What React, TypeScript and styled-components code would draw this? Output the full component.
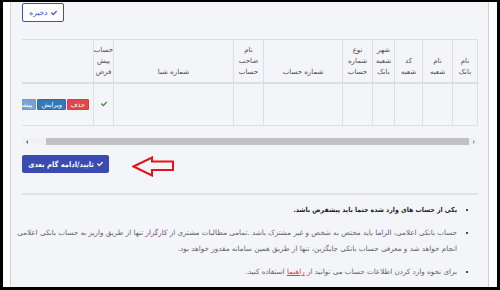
import React from 'react';
import styled, { createGlobalStyle } from 'styled-components';
import { FaCheck } from 'react-icons/fa';

const GlobalStyle = createGlobalStyle`
  html, body {
    margin: 0;
    padding: 0;
    background: #000;
  }
  body {
    width: 500px;
    height: 290px;
    overflow: hidden;
    font-family: "DejaVu Sans", sans-serif;
  }
`;

// Outer white frame inside the black screenshot border
const Frame = styled.div`
  margin: 2px 3px 0 3px;
  height: 285px;
  background: #fff;
  display: flex;
  overflow: hidden;
`;

const Panel = styled.div`
  flex: 1;
  min-width: 0;
  margin: 0 8px 0 7px;
  border-left: 1px solid #cfd0d5;
  border-right: 1px solid #cfd0d5;
  background: #f4f5f9;
  padding: 1px 10px 0 11px;
  direction: rtl;
  display: flex;
  flex-direction: column;
`;

const Toolbar = styled.div`
  display: flex;
  justify-content: flex-end;
`;

const OutlineButton = styled.button`
  height: 19px;
  width: 42px;
  display: inline-flex;
  align-items: center;
  justify-content: center;
  gap: 3px;
  padding: 0;
  border: 1px solid #3f51b5;
  border-radius: 2px;
  background: #fff;
  color: #3f51b5;
  font-family: inherit;
  font-size: 7.5px;
  svg {
    width: 6px;
    height: 6px;
  }
`;

// Table (scrolled horizontally, left part clipped)
const TableViewport = styled.div`
  margin-top: 17px;
  overflow: hidden;
`;

const Table = styled.table`
  width: 494px;
  table-layout: fixed;
  border-collapse: collapse;
  font-size: 7px;
  color: #4a4a4a;
`;

const HeadCell = styled.th`
  border: 1px solid #dddee2;
  border-bottom-width: 2px;
  padding: 3px 0 4px;
  height: 35px;
  vertical-align: bottom;
  text-align: center;
  font-weight: normal;
  line-height: 11px;
  white-space: nowrap;
  overflow: hidden;
`;

const BodyCell = styled.td<{ $align?: string }>`
  border: 1px solid #dddee2;
  height: 41px;
  padding: 0 4px;
  text-align: ${p => p.$align || 'center'};
  vertical-align: middle;
  color: #2f8f2f;
  svg {
    width: 6px;
    height: 6px;
  }
`;

const Actions = styled.div`
  display: flex;
  gap: 1px;
`;

const ActionButton = styled.span<{ $bg: string; $border: string }>`
  display: inline-flex;
  align-items: center;
  height: 11px;
  padding: 0 3px;
  background: ${p => p.$bg};
  border: 1px solid ${p => p.$border};
  border-radius: 1px;
  color: #fff;
  font-size: 6.5px;
  white-space: nowrap;
  box-sizing: border-box;
`;

// Thin fake horizontal scrollbar under the table
const ScrollBar = styled.div`
  direction: ltr;
  margin-top: 12px;
  height: 7px;
  display: flex;
  background: #f1f1f1;
`;

const ScrollArrow = styled.div<{ $dir: 'left' | 'right' }>`
  width: 9px;
  display: flex;
  align-items: center;
  justify-content: center;
  &::before {
    content: '';
    width: 0;
    height: 0;
    border-top: 2px solid transparent;
    border-bottom: 2px solid transparent;
    ${p => (p.$dir === 'left' ? 'border-right: 2px solid #6b6b6b;' : 'border-left: 2px solid #a0a0a0;')}
  }
`;

const ScrollTrack = styled.div`
  width: 15px;
`;

const ScrollThumb = styled.div`
  flex: 1;
  background: #c1c1c1;
`;

const SubmitRow = styled.div`
  direction: ltr;
  margin-top: 10px;
  display: flex;
  align-items: flex-start;
`;

const PrimaryButton = styled.button`
  height: 18px;
  width: 87px;
  display: inline-flex;
  align-items: center;
  justify-content: center;
  gap: 3px;
  padding: 0;
  border: none;
  border-radius: 2px;
  background: #3a4bb1;
  color: #fff;
  font-family: "DejaVu Sans Condensed", "DejaVu Sans", sans-serif;
  font-weight: bold;
  font-size: 7.5px;
  direction: rtl;
  svg {
    width: 6px;
    height: 6px;
  }
`;

const Pointer = styled.svg`
  margin: 1px 0 0 23px;
`;

const Divider = styled.div`
  margin-top: 16px;
  height: 2px;
  background: #e2e3e7;
`;

const Notes = styled.ul`
  margin: 7px 0 0;
  padding: 0 21px 0 0;
  font-size: 7.2px;
  line-height: 16px;
  color: #666;
`;

const Note = styled.li<{ $strong?: boolean }>`
  margin-bottom: 7px;
  white-space: nowrap;
  color: ${p => (p.$strong ? '#1f1f1f' : '#666')};
  font-weight: ${p => (p.$strong ? 'bold' : 'normal')};
  font-size: ${p => (p.$strong ? '6.9px' : 'inherit')};
  font-family: ${p => (p.$strong ? '"DejaVu Sans Condensed", "DejaVu Sans", sans-serif' : 'inherit')};
  &::marker {
    color: #111;
    font-size: 7.2px;
  }
`;

const Accent = styled.span`
  color: #7b3f86;
`;

const GuideLink = styled.a`
  color: #e53935;
  text-decoration: underline;
`;

const columns: { label: string[]; width: number }[] = [
  { label: ['نام', 'بانک'], width: 25 },
  { label: ['نام', 'شعبه'], width: 30 },
  { label: ['کد', 'شعبه'], width: 28 },
  { label: ['شهر', 'شعبه', 'بانک'], width: 22 },
  { label: ['نوع', 'شماره', 'حساب'], width: 30 },
  { label: ['شماره حساب'], width: 79 },
  { label: ['نام', 'صاحب', 'حساب'], width: 30 },
  { label: ['شماره شبا'], width: 120 },
  { label: ['حساب', 'پیش', 'فرض'], width: 20 },
  { label: [''], width: 110 },
];

export default function App() {
  return (
    <>
      <GlobalStyle />
      <Frame>
        <Panel>
          <Toolbar>
            <OutlineButton>
              <FaCheck />
              ذخیره
            </OutlineButton>
          </Toolbar>

          <TableViewport>
            <Table>
              <colgroup>
                {columns.map((c, i) => (
                  <col key={i} style={{ width: c.width }} />
                ))}
              </colgroup>
              <thead>
                <tr>
                  {columns.map((c, i) => (
                    <HeadCell key={i}>
                      {c.label.map((l, j) => (
                        <React.Fragment key={j}>
                          {j > 0 && <br />}
                          {l}
                        </React.Fragment>
                      ))}
                    </HeadCell>
                  ))}
                </tr>
              </thead>
              <tbody>
                <tr>
                  {columns.slice(0, 8).map((_, i) => (
                    <BodyCell key={i} />
                  ))}
                  <BodyCell>
                    <FaCheck />
                  </BodyCell>
                  <BodyCell $align="right">
                    <Actions>
                      <ActionButton $bg="#e0474c" $border="#d43f3a">حذف</ActionButton>
                      <ActionButton $bg="#337ab7" $border="#2e6da4">ویرایش</ActionButton>
                      <ActionButton $bg="#77a3d3" $border="#6d98c8">پیشفرض</ActionButton>
                    </Actions>
                  </BodyCell>
                </tr>
              </tbody>
            </Table>
          </TableViewport>

          <ScrollBar>
            <ScrollArrow $dir="left" />
            <ScrollTrack />
            <ScrollThumb />
            <ScrollArrow $dir="right" />
          </ScrollBar>

          <SubmitRow>
            <PrimaryButton>
              <FaCheck />
              تایید/ادامه گام بعدی
            </PrimaryButton>
            <Pointer width="44" height="21" viewBox="0 0 44 21">
              <polygon
                points="1.5,10.5 20,1.5 20,5.5 41,5.5 41,14 20,14 20,19.5"
                fill="none"
                stroke="#e3131b"
                strokeWidth="2"
                strokeLinejoin="miter"
              />
            </Pointer>
          </SubmitRow>

          <Divider />

          <Notes>
            <Note $strong>یکی از حساب های وارد شده حتما باید پیشفرض باشد.</Note>
            <Note>
              حساب بانکی اعلامی، <Accent>الزاما</Accent> باید مختص به شخص و غیر مشترک باشد .تمامی مطالبات مشتری از <Accent>کارگزار</Accent> تنها از طریق واریز به حساب بانکی اعلامی
              <br />
              انجام خواهد شد و معرفی حساب بانکی جایگزین، تنها از طریق همین سامانه مقدور خواهد بود.
            </Note>
            <Note>
              برای نحوه وارد کردن اطلاعات حساب می توانید از <GuideLink>راهنما</GuideLink> استفاده کنید.
            </Note>
          </Notes>
        </Panel>
      </Frame>
    </>
  );
}
